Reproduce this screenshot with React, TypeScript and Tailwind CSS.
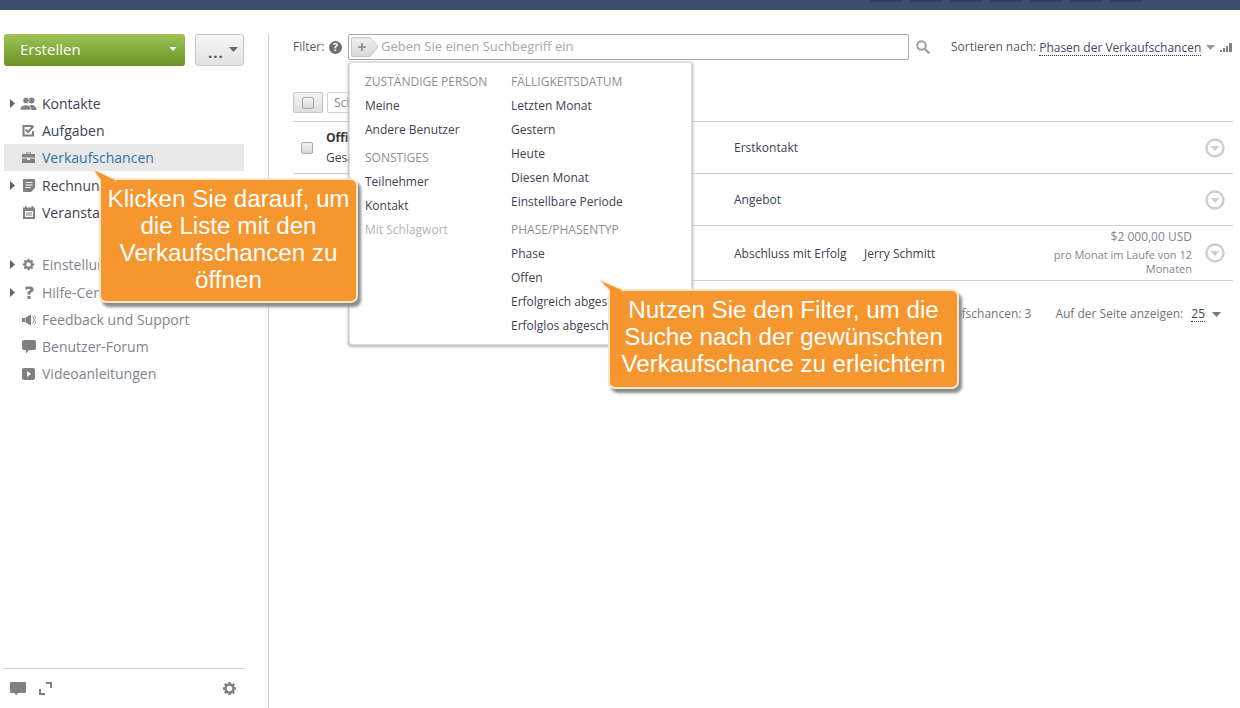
import React from "react";

const Caret = ({ className = "" }: { className?: string }) => (
  <svg width="9" height="5" viewBox="0 0 9 5" className={className}><path d="M0 0h9L4.500 5z" fill="currentColor" /></svg>
);
const Side = ({ className = "" }: { className?: string }) => (
  <svg width="5" height="9" viewBox="0 0 5 9" className={className}><path d="M0 0v9l5-4.500z" fill="#666" /></svg>
);
const Gear = ({ size = 14, color = "#808080" }: { size?: number; color?: string }) => (
  <svg width={size} height={size} viewBox="0 0 16 16" fill="none">
    <path d="M8 1v14M1 8h14M3 3l10 10M13 3L3 13" stroke={color} strokeWidth="2.600" />
    <circle cx="8" cy="8" r="4.200" stroke={color} strokeWidth="2.600" fill="#fff" />
  </svg>
);

const icons: Record<string, React.ReactNode> = {
  users: (
    <svg width="17" height="13" viewBox="0 0 17 13" fill="#808080">
      <circle cx="11.500" cy="3.500" r="3" /><path d="M7.500 13c0-3 1.500-5 4-5s5 2 5 5z" />
      <circle cx="6" cy="3.500" r="3.200" stroke="#fff" strokeWidth=".7" /><path d="M0 13c0-3 2.500-5 6-5s5 2 5 5z" stroke="#fff" strokeWidth=".7" />
    </svg>
  ),
  task: (
    <svg width="13" height="13" viewBox="0 0 13 13">
      <path d="M.5 1h10v2H2.500v7.500H10V7h2v5.500H.5z" fill="#808080" />
      <path d="M3.500 5.500l2.500 2.500 5.500-6" stroke="#808080" strokeWidth="2" fill="none" />
    </svg>
  ),
  case: (
    <svg width="13" height="11" viewBox="0 0 13 11" fill="#808080">
      <path d="M4 2V.5h5V2h4v3.500H0V2zM5 2h3v-.7H5zM0 6.500h5V8h3V6.500h5V11H0z" />
    </svg>
  ),
  invoice: (
    <svg width="12" height="13" viewBox="0 0 12 13">
      <path d="M1 0h10a1 1 0 011 1v8l-4 4H1a1 1 0 01-1-1V1a1 1 0 011-1z" fill="#808080" />
      <path d="M2.500 3.500h7M2.500 6h7M2.500 8.500h5" stroke="#fff" strokeWidth="1.200" />
    </svg>
  ),
  cal: (
    <svg width="12" height="13" viewBox="0 0 12 13">
      <path d="M0 1.500h2V0h1.500v1.500h5V0H10v1.500h2V13H0z" fill="#808080" />
      <path d="M2 5h8v6H2z" fill="#fff" /><path d="M3 7h6M3 9h6" stroke="#808080" />
    </svg>
  ),
  gear: <Gear size={13} />,
  help: (
    <svg width="10" height="13" viewBox="0 0 10 13" fill="#808080">
      <path d="M1 1.500L3 .5h4l2.500 1.500v3L6.500 7v1.500h-3V6L6 4.300V3H3.500L2 4z" /><path d="M3.500 10h3v3h-3z" />
    </svg>
  ),
  bull: (
    <svg width="14" height="12" viewBox="0 0 14 12" fill="#808080">
      <path d="M0 4h3v4H0zM3.500 3.500L9 .5v11L3.500 8.500z" /><path d="M10.500 2.500c2 1.500 2 5.500 0 7" stroke="#808080" fill="none" /><path d="M12 1c3 2.500 3 7.500 0 10" stroke="#808080" fill="none" strokeWidth=".7" />
    </svg>
  ),
  chat: (
    <svg width="14" height="14" viewBox="0 0 14 14" fill="#808080">
      <path d="M2 0h10a2 2 0 012 2v6a2 2 0 01-2 2H7l-3 3.500V10H2a2 2 0 01-2-2V2a2 2 0 012-2z" />
    </svg>
  ),
  video: (
    <svg width="13" height="12" viewBox="0 0 13 12">
      <rect width="13" height="12" rx="2" fill="#808080" /><path d="M5 3l4 3-4 3z" fill="#fff" />
    </svg>
  ),
};

const NavRow = ({ icon, label, arrow, active, muted, cls = "" }: { icon: string; label: string; arrow?: boolean; active?: boolean; muted?: boolean; cls?: string }) => (
  <div className={`h-[27px] flex items-center text-sm ${cls} ${active ? "bg-[#e8e8e8] text-[#2d75a8]" : muted ? "text-[#7f8590]" : "text-[#3c4352]"}`}>
    <span className="w-[11px] flex justify-end">{arrow && <Side />}</span>
    <span className="w-[27px] flex justify-center">{icons[icon]}</span>
    <span className="whitespace-nowrap">{label}</span>
  </div>
);

const Check = () => (
  <span className="block w-[12px] h-[12px] rounded-[2px] border border-[#a9a9a9] bg-gradient-to-b from-[#f4f4f4] to-[#d8d8d8]" />
);

const RowArrow = () => (
  <svg width="20" height="20" viewBox="0 0 20 20">
    <circle cx="10" cy="10" r="8.500" fill="#fff" stroke="#cdcdcd" strokeWidth="2.400" />
    <path d="M5.500 8h9L10 13z" fill="#cdcdcd" />
  </svg>
);

const Head = ({ children, cls = "" }: { children: React.ReactNode; cls?: string }) => (
  <div className={`h-[24px] flex items-center text-[#8b8f98] whitespace-nowrap ${cls}`}>{children}</div>
);
const Item = ({ children, muted }: { children: React.ReactNode; muted?: boolean }) => (
  <div className={`h-[24px] flex items-center whitespace-nowrap ${muted ? "text-[#b0b3b8]" : "text-[#3c4352]"}`}>{children}</div>
);

const calloutCls =
  "absolute bg-[#f5962e] rounded-[5px] text-white text-center text-[24.2px] leading-[27px] shadow-[0_0_0_2px_#fde6cb,3px_4px_3px_2px_#8a8a8a] font-['Liberation_Sans',Arial,sans-serif]";

export default function App() {
  return (
    <div className="relative w-[1240px] h-[708px] overflow-hidden bg-white font-['Open_Sans',sans-serif] text-[12px]">
      <div className="h-[10px] bg-[#3f4c6e] pl-[870px] flex gap-[8px]">
        {[0, 1, 2, 3, 4, 5, 6].map((i) => (
          <span key={i} className="w-[32px] h-[2px] bg-[#36415f] rounded-b-[2px]" />
        ))}
      </div>
      <div className="flex h-[698px]">
        <aside className="w-[268px] pt-[24px] pl-[4px] flex flex-col">
          <div className="w-[240px] flex-1 flex flex-col">
            <div className="flex justify-between">
              <div className="w-[181px] h-[32px] rounded-[3px] bg-gradient-to-b from-[#9dc455] to-[#6b9222] flex items-center justify-between pl-[16px] pr-[8px] pb-[2px] text-white text-[15px]">
                <span>Erstellen</span><Caret className="w-[8px] h-[4px]" />
              </div>
              <div className="w-[49px] h-[32px] rounded-[3px] border border-[#c8c8c8] bg-gradient-to-b from-[#f6f6f6] to-[#e2e2e2] flex items-center justify-between pl-[12px] pr-[5px] text-[#555] text-[15px] font-bold">
                <span className="mt-[4px] tracking-[1px]">...</span><Caret className="text-[#666] -mt-[1px]" />
              </div>
            </div>
            <div className="mt-[24px]">
              <NavRow icon="users" label="Kontakte" arrow />
              <NavRow icon="task" label="Aufgaben" />
              <NavRow icon="case" label="Verkaufschancen" active />
              <NavRow icon="invoice" label="Rechnungen" arrow cls="mt-[1px]" />
              <NavRow icon="cal" label="Veranstaltungen" />
              <div className="h-[25px]" />
              <NavRow icon="gear" label="Einstellungen" arrow muted />
              <NavRow icon="help" label="Hilfe-Center" arrow muted cls="mt-[1px]" />
              <NavRow icon="bull" label="Feedback und Support" muted />
              <NavRow icon="chat" label="Benutzer-Forum" muted />
              <NavRow icon="video" label="Videoanleitungen" muted />
            </div>
            <div className="mt-auto h-[40px] border-t border-[#d0d0d0] flex items-center pl-[6px] pr-[7px]">
              <svg width="16" height="14" viewBox="0 0 16 14" fill="#808080"><path d="M1 0h14a1 1 0 011 1v9a1 1 0 01-1 1H8l-2 2.500L4.500 11H1a1 1 0 01-1-1V1a1 1 0 011-1z" /></svg>
              <svg width="13" height="13" viewBox="0 0 13 13" fill="none" stroke="#808080" strokeWidth="2" className="ml-[13px]"><path d="M7 1h5v5M1 7v5h5" /></svg>
              <span className="ml-auto"><Gear size={15} /></span>
            </div>
          </div>
        </aside>
        <main className="flex-1 border-l border-[#d0d0d0] mt-[24px] pl-[24px] pr-[7px] text-[#3c4352]">
          <div className="h-[26px] flex items-center">
            <span className="text-[#555c68] w-[33px] whitespace-nowrap">Filter:</span>
            <svg width="13" height="13" viewBox="0 0 12 12" className="ml-[3px]"><circle cx="6" cy="6" r="6" fill="#6f6f6f" /><text x="6" y="9.500" textAnchor="middle" fontSize="9.500" fontWeight="700" fill="#fff" fontFamily="Open Sans">?</text></svg>
            <div className="ml-[6px] w-[561px] h-[26px] border border-[#a8a8a8] rounded-[2px] flex items-center pl-[2px]">
              <svg width="28" height="20" viewBox="0 0 28 20"><defs><linearGradient id="pl" x1="0" y1="0" x2="0" y2="1"><stop offset="0" stopColor="#f0f0f0" /><stop offset="1" stopColor="#d8d8d8" /></linearGradient></defs><path d="M2 .5h17L27 10l-8 9.500H2A1.500 1.500 0 01.5 18V2A1.500 1.500 0 012 .5z" fill="url(#pl)" stroke="#c4c4c4" /><path d="M7 10h8M11 6v8" stroke="#8a8a8a" strokeWidth="1.600" /></svg>
              <span className="ml-[2px] text-[#a5a8ad] text-[13px] whitespace-nowrap">Geben Sie einen Suchbegriff ein</span>
            </div>
            <svg width="14" height="14" viewBox="0 0 14 14" fill="none" stroke="#a0a0a0" className="ml-[7px]"><circle cx="5.500" cy="5.500" r="4.300" strokeWidth="2" /><path d="M9 9l4.500 4.500" strokeWidth="2.400" /></svg>
            <span className="ml-[21px] text-[#555c68] whitespace-nowrap">Sortieren nach:</span>
            <span className="ml-[3px] text-[#3c4a6a] whitespace-nowrap border-b border-dotted border-[#333] leading-[14px] mt-[2px]">Phasen der Verkaufschancen</span>
            <Caret className="ml-[5px] text-[#999]" />
            <svg width="12" height="9" viewBox="0 0 12 9" fill="#808080" className="ml-[5px]"><path d="M0 7h2v2H0zM3 5h2v4H3zM6 3h2v6H6zM9 0h3v9H9z" /></svg>
          </div>
          <div className="h-[61px] pt-[32px] flex items-start gap-[4px]">
            <div className="w-[30px] h-[21px] rounded-[2px] border border-[#c8c8c8] bg-gradient-to-b from-[#f2f2f2] to-[#e0e0e0] flex items-center justify-center"><Check /></div>
            <div className="w-[60px] h-[21px] rounded-[2px] border border-[#d4d4d4] pl-[6px] flex items-center text-[#888]">Schließen</div>
          </div>
          <div className="border-t border-[#d0d0d0] h-[52px] flex items-center">
            <span className="w-[33px] pl-[8px]"><Check /></span>
            <div className="w-[408px] flex flex-col gap-[4px]">
              <span className="font-bold text-[#333] leading-[16px]">Office Paket</span>
              <span className="leading-[16px]">Gesamtsumme</span>
            </div>
            <span className="flex-1">Erstkontakt</span>
            <span className="mr-[8px]"><RowArrow /></span>
          </div>
          <div className="border-t border-[#d0d0d0] h-[52px] flex items-center">
            <span className="w-[441px]" />
            <span className="flex-1">Angebot</span>
            <span className="mr-[8px]"><RowArrow /></span>
          </div>
          <div className="border-t border-b border-[#d0d0d0] h-[56px] flex items-center">
            <span className="w-[441px]" />
            <span className="w-[130px] whitespace-nowrap pt-[1px]">Abschluss mit Erfolg</span>
            <span className="w-[130px] whitespace-nowrap pt-[1px]">Jerry Schmitt</span>
            <div className="w-[198px] pl-[50px] pb-[1px] text-right text-[#7f8590] text-[11px] leading-[14px]">
              <div className="text-[12px] leading-[16px] mb-[3px]">$2 000,00 USD</div>
              <div>pro Monat im Laufe von 12 Monaten</div>
            </div>
            <span className="ml-[13px]"><RowArrow /></span>
          </div>
          <div className="h-[66px] flex items-center justify-end text-[#6f7580] pr-[12px] whitespace-nowrap">
            <span>Gesamtzahl der Verkaufschancen: 3</span>
            <span className="ml-[24px]">Auf der Seite anzeigen:</span>
            <span className="ml-[8px] text-[#3c4352] border-b border-dotted border-[#333] leading-[14px]">25</span>
            <Caret className="ml-[7px] text-[#777]" />
          </div>
        </main>
      </div>

      <div className="absolute left-[349px] top-[62px] w-[343px] h-[283px] bg-white rounded-[3px] border border-[#dcdcdc] shadow-[0_1px_3px_1px_#b5b5b5] pt-[7px] pl-[15px] flex">
        <div className="w-[146px]">
          <Head>ZUSTÄNDIGE PERSON</Head>
          <Item>Meine</Item>
          <Item>Andere Benutzer</Item>
          <Head cls="mt-[4px]">SONSTIGES</Head>
          <Item>Teilnehmer</Item>
          <Item>Kontakt</Item>
          <Item muted>Mit Schlagwort</Item>
        </div>
        <div>
          <Head>FÄLLIGKEITSDATUM</Head>
          <Item>Letzten Monat</Item>
          <Item>Gestern</Item>
          <Item>Heute</Item>
          <Item>Diesen Monat</Item>
          <Item>Einstellbare Periode</Item>
          <Head cls="mt-[4px]">PHASE/PHASENTYP</Head>
          <Item>Phase</Item>
          <Item>Offen</Item>
          <Item>Erfolgreich abgeschlossen</Item>
          <Item>Erfolglos abgeschlossen</Item>
        </div>
      </div>

      <div className={`${calloutCls} left-[101px] top-[180px] w-[255px] h-[121px] pt-[5px]`}>
        Klicken Sie darauf, um die Liste mit den Verkaufschancen zu öffnen
      </div>
      <svg width="32" height="24" viewBox="0 0 32 24" className="absolute left-[90px] top-[166px]">
        <path d="M3 3L11 15H25z" fill="#f5962e" stroke="#fde6cb" strokeWidth="2" strokeLinejoin="round" />
        <path d="M4.500 4.500L11 14V20H25V14z" fill="#f5962e" />
      </svg>
      <div className={`${calloutCls} left-[610px] top-[291px] w-[347px] h-[96px] pt-[5px]`}>
        Nutzen Sie den Filter, um die Suche nach der gewünschten Verkaufschance zu erleichtern
      </div>
      <svg width="32" height="24" viewBox="0 0 32 24" className="absolute left-[597px] top-[277px]">
        <path d="M3 3L13 14H25z" fill="#f5962e" stroke="#fde6cb" strokeWidth="2" strokeLinejoin="round" />
        <path d="M4.500 4.500L13 13V20H25V13z" fill="#f5962e" />
      </svg>
    </div>
  );
}
